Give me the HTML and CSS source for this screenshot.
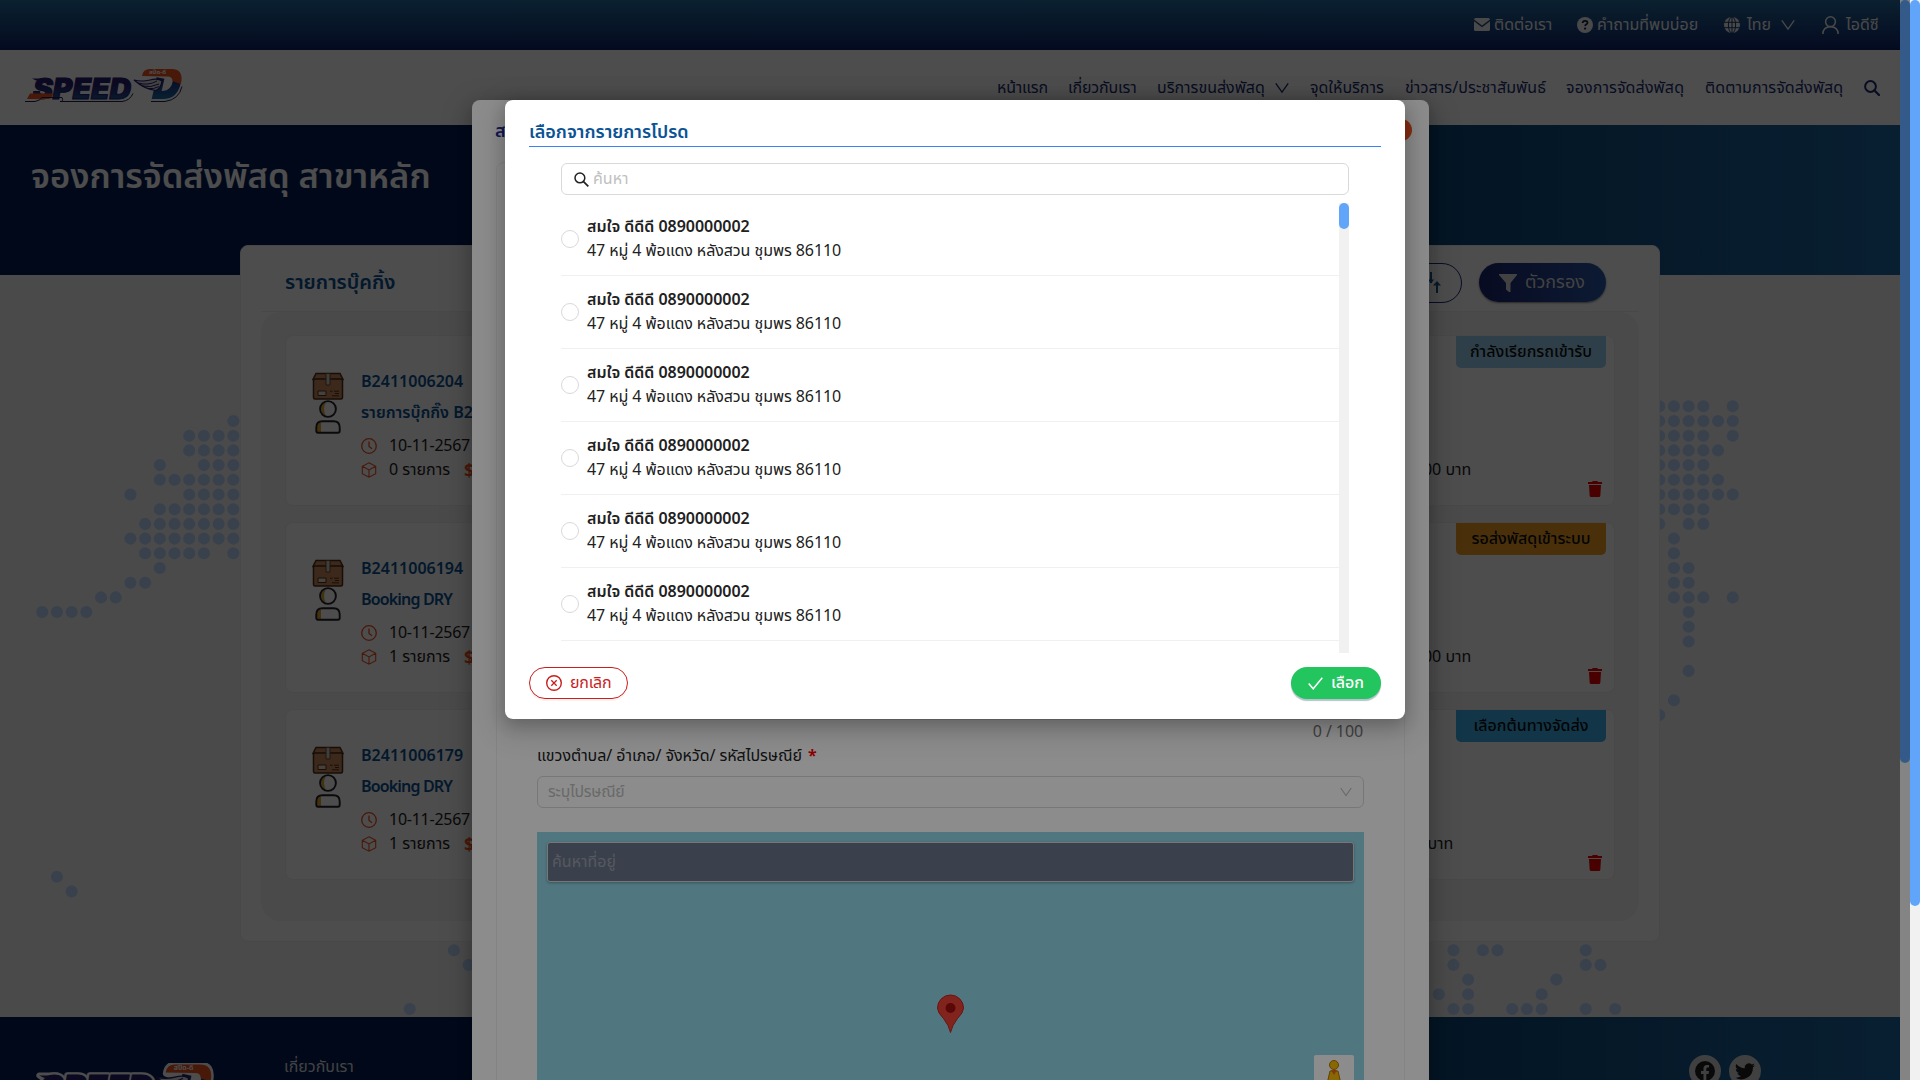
FILE: index.html
```html
<!DOCTYPE html>
<html lang="th">
<head>
<meta charset="utf-8">
<title>SPEED-D จองการจัดส่งพัสดุ</title>
<link rel="stylesheet" href="styles.css">
</head>
<body>
<svg width="0" height="0" class="defs" aria-hidden="true">
  <defs>
    <linearGradient id="navy" x1="0" y1="0" x2="0" y2="1"><stop offset="0" stop-color="#2a1a78"/><stop offset=".4" stop-color="#26206f"/><stop offset="1" stop-color="#1a70b0"/></linearGradient>
    <linearGradient id="navyD" gradientUnits="userSpaceOnUse" x1="0" y1="8" x2="0" y2="32"><stop offset="0" stop-color="#26206f"/><stop offset="1" stop-color="#1a70b0"/></linearGradient>
    <symbol id="i-search" viewBox="0 0 16 16"><circle cx="6.500" cy="6.500" r="5.400" fill="none" stroke="currentColor" stroke-width="2"/><path d="M10.500 10.500L15 15" stroke="currentColor" stroke-width="2.300" stroke-linecap="round"/></symbol>
    <symbol id="i-down" viewBox="0 0 14 14"><path d="M.8 2.300L7 11.200l6.200-8.900" fill="none" stroke="currentColor" stroke-width="1.300"/></symbol>
    <symbol id="i-box" viewBox="0 0 32 28"><path d="M4 1.500h24l3 6H1z" fill="#c98a5c" stroke="#52301b" stroke-width="1.500"/><rect x="1.500" y="7" width="29" height="20" rx="1.500" fill="#c98a5c" stroke="#52301b" stroke-width="1.500"/><path d="M14 1.500h4v11.500h-4z" fill="#d8cfc4" stroke="#6b4a33"/><path d="M6 19h8v4.500H6z" fill="#e8ddd0" stroke="#52301b"/><path d="M18 19.200h2.500m1.500 0h5M23 21.500h4M20 23.800h7" stroke="#52301b"/></symbol>
    <symbol id="i-person" viewBox="0 0 26 34"><path d="M8 4q-3.500 5 0 10l3 2Q7 9 11 2z" fill="#e0a82e"/><circle cx="13" cy="9" r="7.900" fill="none" stroke="#23232b" stroke-width="1.900"/><path d="M2 32V27q0-3.500 4-5v10z" fill="#e0a82e"/><path d="M1.300 31v-3.500q0-6.200 6.200-6.200h11q6.200 0 6.200 6.200V31q0 1.700-1.700 1.700H3q-1.700 0-1.700-1.700z" fill="none" stroke="#23232b" stroke-width="1.900"/></symbol>
    <symbol id="i-clock" viewBox="0 0 16 16"><circle cx="8" cy="8" r="7.300" fill="none" stroke="currentColor" stroke-width="1.300"/><path d="M8 3.500v5l3 2.300" fill="none" stroke="currentColor" stroke-width="1.300"/></symbol>
    <symbol id="i-cube" viewBox="0 0 16 16"><path d="M8 .8l6.700 3.500v7.400L8 15.200 1.300 11.700V4.300zM1.300 4.300L8 7.900l6.700-3.600M8 7.900v7.300" fill="none" stroke="currentColor" stroke-width="1.100"/></symbol>
    <symbol id="i-trash" viewBox="0 0 14 16"><path d="M0 1h4l.8-1h4.400L10 1h4v2H0zM1 4h12l-.7 10.700q-.1 1.300-1.400 1.300H3.100q-1.300 0-1.400-1.300z" fill="currentColor"/></symbol>
    <symbol id="i-logo" viewBox="0 0 160 36">
      <text x="9" y="31" class="logo-word halo" textLength="98" lengthAdjust="spacingAndGlyphs">SPEED</text>
      <path d="M118 9q1-8 8-8h22q11 0 9 13-3 17-17 18h-10l5-17-8-2z" class="halo"/>
      <path d="M8 10.500h16v3H12z" class="halo"/>
      <text x="9" y="31" class="logo-word" textLength="98" lengthAdjust="spacingAndGlyphs">SPEED</text>
      <path d="M8 10.500h16v2H12z" fill="#26206f"/>
      <path d="M6 25.500h23q-1 5.500-5 5.500H3z" fill="#f0521f"/>
      <path d="M1 33.500h10q5-1 7-4h20q2 4-2 4h62q8-1 11-8M127 33.500h14q14-2 17-15" fill="none" stroke="#242052" stroke-width="1"/>
      <path d="M136.500 10l-3.800 17h6q12 0 14.300-14" fill="none" stroke="url(#navyD)" stroke-width="8"/>
      <path d="M118 8q1-7 8-7h22q10.500 0 9.500 12l-1 3-8-3q0-4.500-5-4.500z" fill="#f0521f"/>
      <text x="125" y="5.800" class="logo-tag" textLength="17" lengthAdjust="spacingAndGlyphs">สปีด-ดี</text>
      <path d="M110 12q8 2 16 0 8-2 12 1-1 7-6 9.500-12-1.500-22-10.500z" fill="#ddd" stroke="#26206f" stroke-width="1.200"/>
      <path d="M114 15q10 3 19-2M118 18q9 2 17-2M123 20.500q7 1 12-2" fill="none" stroke="#26206f" stroke-width="1"/>
    </symbol>
  </defs>
</svg>

<div class="page">
  <div class="topbar">
    <span class="tb"><svg width="16" height="13" viewBox="0 0 16 13"><path d="M1.500 0h13Q16 0 16 1.500L8 7.500 0 1.500Q0 0 1.500 0zM0 3.200l8 6 8-6v8.300q0 1.500-1.500 1.500h-13Q0 13 0 11.500z" fill="currentColor"/></svg>ติดต่อเรา</span>
    <span class="tb faq"><svg width="16" height="16" viewBox="0 0 16 16"><circle cx="8" cy="8" r="8" fill="currentColor"/><path d="M5.600 6q.2-2.200 2.500-2.200 2.400 0 2.400 2 0 1-1.300 1.800-1.100.6-1.100 1.500" fill="none" stroke="#0b1c48" stroke-width="1.700"/><circle cx="8.100" cy="11.600" r="1.100" fill="#0b1c48"/></svg>คำถามที่พบบ่อย</span>
    <span class="tb lang"><svg width="16" height="16" viewBox="0 0 16 16"><circle cx="8" cy="8" r="8" fill="currentColor"/><path d="M0 5.300h16M0 10.700h16M8 0v16" stroke="#143a70"/><ellipse cx="8" cy="8" rx="3.600" ry="8.200" fill="none" stroke="#143a70"/></svg><span>ไทย</span><svg width="14" height="14"><use href="#i-down"/></svg></span>
    <span class="tb user"><svg width="17" height="18" viewBox="0 0 17 18"><circle cx="8.500" cy="5.700" r="4.900" fill="none" stroke="currentColor" stroke-width="1.500"/><path d="M.8 18q.3-7.300 7.700-7.300T16.200 18" fill="none" stroke="currentColor" stroke-width="1.500"/></svg>ไอดีซี</span>
  </div>
  <div class="nav">
    <svg class="logo" width="160" height="36"><use href="#i-logo"/></svg>
    <div class="links">
      <span class="n1">หน้าแรก</span><span class="n2">เกี่ยวกับเรา</span><span class="n3">บริการขนส่งพัสดุ</span><svg class="navdown" width="14" height="14"><use href="#i-down"/></svg><span class="n4">จุดให้บริการ</span><span class="n5">ข่าวสาร/ประชาสัมพันธ์</span><span class="n6">จองการจัดส่งพัสดุ</span><span class="n7">ติดตามการจัดส่งพัสดุ</span><svg width="16" height="16"><use href="#i-search"/></svg>
    </div>
  </div>
  <div class="banner"><h1>จองการจัดส่งพัสดุ สาขาหลัก</h1></div>
  <div class="body">
    <svg class="dots" width="1900" height="742" viewBox="0 0 1900 742"><path transform="translate(42.200 146) scale(14.700)" d="M13 0h.01M10 1h3.100M10 2h3.100M8 3h.01M11 3h2.100M8 4h5.100M6 5h.01M10 5h3.100M8 6h5.100M7 7h6.100M6 8h7.100M7 9h4.100M13 9h.01M8 10h.01M6 11h1.100M4 12h1.100M0 13h3.100M1 31h.01M2 32h.01M26 35h2.100M28 36h.01M29 37h.01M25 40h.01M110 -1h3.100M115 -1h.01M110 0h5.100M110 1h3.100M115 1h.01M110 2h4.100M110 3h3.100M110 4h4.100M110 5h5.100M110 6h3.100M110 7h.01M112 7h1.100M111 8h.01M111 9h.01M111 10h1.100M111 11h1.100M111 12h2.100M115 12h.01M112 13h.01M112 14h.01M112 15h.01M112 17h.01M111 19h.01M110 20h.01M97 35h2.100M104 35h.01M96 36h.01M98 36h1.100M105 36h.01M96 37h.01M105 37h1.100M97 38h.01M103 38h.01M95 39h.01M97 39h.01M102 39h.01M96 40h1.100M100 40h2.100M105 40h.01M107 40h.01" fill="none" stroke="#bfdbfe" stroke-width=".82" stroke-linecap="round" stroke-dasharray=".005 .995"/></svg>
    <div class="main">
      <div class="mainhead">
        <h2>รายการบุ๊คกิ้ง</h2>
        <div class="actions">
          <span class="sort"><svg width="24" height="22" viewBox="0 0 24 22"><path d="M14 0v11M20 21V10" stroke="currentColor" stroke-width="2"/><path d="M11 7.500h6L14 11.500zM16 13.500h8L20 9z" fill="currentColor"/></svg></span>
          <span class="filter"><svg width="18" height="18" viewBox="0 0 18 18"><path d="M0 0h18v1l-6.500 8v9H10l-3-2.500V9L0 1z" fill="currentColor"/></svg>ตัวกรอง</span>
        </div>
      </div>
      <div class="panel">
        <div class="bk">
          <div class="pics"><svg width="32" height="28"><use href="#i-box"/></svg><svg width="26" height="34"><use href="#i-person"/></svg></div>
          <div class="info"><b>B2411006204</b><b class="name">รายการบุ๊กกิ๊ง B2411006204</b><div class="row"><svg width="16" height="16"><use href="#i-clock"/></svg><span class="date">10-11-2567</span></div><div class="row r2"><svg width="16" height="16"><use href="#i-cube"/></svg><span class="qty">0 รายการ</span><em>$</em><span class="baht">0.00 บาท</span></div></div>
          <div class="side"><span class="badge sky">กำลังเรียกรถเข้ารับ</span><svg class="trash" width="14" height="16"><use href="#i-trash"/></svg></div>
        </div>
        <div class="bk">
          <div class="pics"><svg width="32" height="28"><use href="#i-box"/></svg><svg width="26" height="34"><use href="#i-person"/></svg></div>
          <div class="info"><b>B2411006194</b><b class="dry">Booking DRY</b><div class="row"><svg width="16" height="16"><use href="#i-clock"/></svg><span class="date">10-11-2567</span></div><div class="row r2"><svg width="16" height="16"><use href="#i-cube"/></svg><span class="qty">1 รายการ</span><em>$</em><span class="baht">0.00 บาท</span></div></div>
          <div class="side"><span class="badge amber">รอส่งพัสดุเข้าระบบ</span><svg class="trash" width="14" height="16"><use href="#i-trash"/></svg></div>
        </div>
        <div class="bk">
          <div class="pics"><svg width="32" height="28"><use href="#i-box"/></svg><svg width="26" height="34"><use href="#i-person"/></svg></div>
          <div class="info"><b>B2411006179</b><b class="dry">Booking DRY</b><div class="row"><svg width="16" height="16"><use href="#i-clock"/></svg><span class="date">10-11-2567</span></div><div class="row r2"><svg width="16" height="16"><use href="#i-cube"/></svg><span class="qty">1 รายการ</span><em>$</em><span class="baht third">0 บาท</span></div></div>
          <div class="side"><span class="badge blue">เลือกต้นทางจัดส่ง</span><svg class="trash" width="14" height="16"><use href="#i-trash"/></svg></div>
        </div>
      </div>
    </div>
  </div>
  <div class="footer">
    <svg class="flogo" width="184" height="42"><use href="#i-logo"/></svg>
    <span class="about">เกี่ยวกับเรา</span>
    <div class="social">
      <span><svg width="20" height="20" viewBox="0 0 20 20"><circle cx="10" cy="10" r="10" fill="#222"/><path d="M8.500 20v-7H6v-3h2.500V7.500Q8.500 4 12 4h2v2.600h-1.500q-1.200 0-1.200 1.300V10H14l-.5 3h-2.200v7z" fill="#d8d8d8"/></svg></span>
      <span><svg width="20" height="17" viewBox="0 0 24 20"><path d="M24 2.400a9.800 9.800 0 0 1-2.800.8 5 5 0 0 0 2.100-2.700 9.900 9.900 0 0 1-3.100 1.200A4.900 4.900 0 0 0 11.800 6.100 14 14 0 0 1 1.700.9a4.900 4.900 0 0 0 1.500 6.600A4.900 4.900 0 0 1 1 6.900a4.900 4.900 0 0 0 3.900 4.900 5 5 0 0 1-2.200.1 4.900 4.900 0 0 0 4.600 3.400A9.900 9.900 0 0 1 0 17.300 14 14 0 0 0 21.500 4.900 10 10 0 0 0 24 2.400z" fill="#222"/></svg></span>
    </div>
  </div>
</div>

<div class="mask">
  <div class="dialog1">
    <div class="d1head"><span class="d1title">ส</span><i class="close"></i></div>
    <div class="d1body">
      <div class="area"></div>
      <div class="count">0 / 100</div>
      <div class="label">แขวงตำบล/ อำเภอ/ จังหวัด/ รหัสไปรษณีย์ <b>*</b></div>
      <div class="select"><span>ระบุไปรษณีย์</span><svg width="12" height="12"><use href="#i-down"/></svg></div>
      <div class="map">
        <div class="mapsearch">ค้นหาที่อยู่</div>
        <svg class="pin" width="27" height="38" viewBox="0 0 27 38"><path d="M13.500 37.500Q12 30.500 6.500 23.500.5 17.500.5 13a13 13 0 0 1 26 0q0 4.500-6 10.500-5.500 7-7 14z" fill="#ea4335" stroke="#c5221f"/><circle cx="13.500" cy="13" r="5" fill="#a50e0e"/></svg>
        <div class="peg"><svg width="16" height="26" viewBox="0 0 16 26"><circle cx="8" cy="5" r="4.500" fill="#fbbc04" stroke="#b07a00"/><path d="M4 11h8l3 13-3 2H4l-3-2z" fill="#fbbc04" stroke="#b07a00"/><path d="M5 10h6l-3 5z" fill="#e06a1c"/></svg></div>
      </div>
    </div>
  </div>
  <div class="sb"><i class="th1"></i></div>
</div>

<div class="mask">
  <div class="dialog2">
    <h3>เลือกจากรายการโปรด</h3>
    <div class="find"><svg width="15" height="15" viewBox="0 0 15 15"><circle cx="5.900" cy="5.900" r="4.900" fill="none" stroke="#222" stroke-width="1.500"/><path d="M9.300 9.300l5 5" stroke="#222" stroke-width="1.700"/></svg><span>ค้นหา</span></div>
    <div class="list">
      <div class="items">
        <div class="item"><i></i><div><b>สมใจ ดีดีดี 0890000002</b><p>47 หมู่ 4 พ้อแดง หลังสวน ชุมพร 86110</p></div></div>
        <div class="item"><i></i><div><b>สมใจ ดีดีดี 0890000002</b><p>47 หมู่ 4 พ้อแดง หลังสวน ชุมพร 86110</p></div></div>
        <div class="item"><i></i><div><b>สมใจ ดีดีดี 0890000002</b><p>47 หมู่ 4 พ้อแดง หลังสวน ชุมพร 86110</p></div></div>
        <div class="item"><i></i><div><b>สมใจ ดีดีดี 0890000002</b><p>47 หมู่ 4 พ้อแดง หลังสวน ชุมพร 86110</p></div></div>
        <div class="item"><i></i><div><b>สมใจ ดีดีดี 0890000002</b><p>47 หมู่ 4 พ้อแดง หลังสวน ชุมพร 86110</p></div></div>
        <div class="item"><i></i><div><b>สมใจ ดีดีดี 0890000002</b><p>47 หมู่ 4 พ้อแดง หลังสวน ชุมพร 86110</p></div></div>
      </div>
      <div class="sb3"><i></i></div>
    </div>
    <div class="btns">
      <span class="cancel"><svg width="16" height="16" viewBox="0 0 16 16"><circle cx="8" cy="8" r="7.300" fill="none" stroke="currentColor" stroke-width="1.400"/><path d="M5.300 5.300l5.400 5.400M10.700 5.300l-5.400 5.400" stroke="currentColor" stroke-width="1.300"/></svg>ยกเลิก</span>
      <span class="ok"><svg width="15" height="13" viewBox="0 0 15 13"><path d="M.7 6.500l4.500 5.300L14.300.8" fill="none" stroke="currentColor" stroke-width="1.500"/></svg>เลือก</span>
    </div>
  </div>
</div>
<div class="sb outer"><i class="th2"></i></div>
</body>
</html>
```
FILE: styles.css
```css
*{box-sizing:border-box}
html,body{height:100%;overflow:hidden}
body{margin:0;font:16px/24px "Noto Sans Thai","Noto Sans",sans-serif;color:#212121;background:#f6f6f6;white-space:nowrap}
h1,h2,h3,p{margin:0}
svg{flex:none;display:block;overflow:visible}
.defs{position:absolute}
i{display:block}

.page{width:1900px;height:1080px;overflow:hidden}
.topbar{height:50px;background:linear-gradient(#246d9f,#10246a);display:flex;justify-content:flex-end;padding:0 21px 1px 0;align-items:center;color:#f2f2f2}
.tb{display:flex;align-items:center;gap:4px;width:78px}
.faq{margin-left:25px;width:122px}
.lang{margin-left:25px;gap:7px;width:71px}
.lang span{width:26px;margin-right:1px}
.user{margin-left:27px;gap:7px;width:57px}

.nav{height:75px;background:#fff;display:flex;justify-content:space-between;align-items:center;padding:0 20px 0 24px}
.logo{margin-top:-4px}
.logo-word{font:italic 900 28px "Inter","Liberation Sans",sans-serif;fill:url(#navy);stroke:#26206f;stroke-width:1}
.halo{stroke:#fff;stroke-width:5;fill:#fff;stroke-linejoin:round}
.logo-tag{font:bold 6px "Noto Sans Thai",sans-serif;fill:#fff}
.links{display:flex;align-items:center;color:#1c2f72}
.n1{width:71px;letter-spacing:-.2px}
.n2{width:89px;letter-spacing:-.15px}
.n3{width:118px}
.navdown{margin-right:21px}
.n4{width:95px}
.n5{width:161px;letter-spacing:.1px}
.n6{width:139px;letter-spacing:.13px}
.n7{width:159px;letter-spacing:.1px}

.banner{height:150px;background:linear-gradient(90deg,#031e59 0,#031e59 50%,#0d4577 75%,#1e6aa5);padding:33px 0 0 31px}
h1{font-size:34.500px;line-height:40px;font-weight:600;color:#fff}
.body{height:742px;position:relative}
.dots{position:absolute;left:0;top:0}
.main{position:relative;width:1420px;height:697px;top:-30px;margin:0 auto;background:#fff;border:1px solid #f0f0f0;border-radius:8px;padding:0 20px}
.mainhead{height:66px;display:flex;justify-content:space-between;align-items:center;padding:8px 33px 0 24px;border-bottom:1px solid #f0f0f0}
h2{font-size:20px;font-weight:600;color:#0b5394}
.actions{display:flex;gap:17px;align-items:center}
.sort{width:90px;height:40px;border:1px solid #1e2a86;border-radius:20px;display:flex;align-items:center;justify-content:flex-end;padding-right:20px;color:#1b5c8c}
.filter{width:127px;height:39px;border-radius:20px;background:linear-gradient(90deg,#1b2670,#2a5aaa);box-shadow:0 1px 2px #888;color:#ddd;font-size:18px;display:flex;align-items:center;gap:8px;padding-left:20px}
.panel{height:609px;background:#f6f6f6;border-radius:20px;padding:23px 24px;display:flex;flex-direction:column;gap:16px}
.bk{height:171px;background:#fff;border:1px solid #f0f0f0;border-radius:8px;display:flex;flex:none}
.pics{width:75px;flex:none;padding:36px 0 0 26px;display:flex;flex-direction:column}
.pics svg+svg{margin-left:3px}
.info{flex:1;min-width:0;padding-top:34px}
.info b{display:block;font-weight:600;color:#0b5394;line-height:24px;margin-bottom:7px}
.info .dry{letter-spacing:-.85px}
.row{display:flex;align-items:center;gap:12px;height:24px;margin-top:9px;color:#222}
.row svg{color:#f0521f}
.r2{margin-top:0}
.row em{font:bold 18px "Noto Sans",sans-serif;color:#f0521f;margin-left:1px;margin-right:-1px}
.date{letter-spacing:-.25px}
.qty{width:62px;flex:none}
.baht{width:986px;flex:none;text-align:right}
.baht.third{width:968px}
.side{width:158px;flex:none;padding-right:8px;display:flex;flex-direction:column;justify-content:space-between;align-items:flex-end}
.badge{width:150px;height:32px;line-height:32px;text-align:center;font-weight:500;color:#111;border-radius:0 0 5px 5px}
.sky{background:#9bd3f2}.amber{background:#f2a024}.blue{background:#3cb4f0}
.trash{color:#f00000;margin:0 4px 8px 0}

.footer{height:63px;background:linear-gradient(90deg,#031e59 0,#031e59 50%,#0d4577 75%,#1e6aa5);display:flex;padding-left:30px;color:#ddd}
.flogo{margin-top:46px}
.about{margin:38px 0 0 70px;width:1405px}
.social{display:flex;gap:8px;margin-top:38px}
.social span{width:32px;height:32px;border-radius:50%;background:#d8d8d8;display:flex;align-items:center;justify-content:center}

.mask{position:absolute;left:0;top:0;width:1910px;height:1080px;overflow:hidden;background:rgba(0,0,0,.45)}
.dialog1{width:957px;height:1100px;margin:100px 0 0 472px;background:#fff;border-radius:8px;padding:20px 17px 0 24px;box-shadow:0 6px 16px rgba(0,0,0,.2),0 9px 28px 8px rgba(0,0,0,.12)}
.d1head{display:flex;justify-content:space-between;align-items:center;height:24px;font-size:18px;font-weight:600;color:#1e2a9a}
.d1title{margin-left:-1px}
.close{width:22px;height:22px;border-radius:50%;background:#f0521f;margin-top:-5px}
.d1body{width:909px;height:1000px;margin-top:18px;border:1px solid #f0f0f0;border-radius:8px;padding:0 40px}
.area{height:557px;border-bottom:1px solid #d9d9d9;border-radius:6px}
.count{text-align:right;height:24px;color:#777;letter-spacing:-.1px;padding-right:1px}
.label{letter-spacing:-.04px}
.label b{color:#f00;margin-left:2px}
.select{height:32px;margin-top:8px;border:1px solid #d9d9d9;border-radius:6px;display:flex;align-items:center;justify-content:space-between;padding:0 11px 0 10px;color:#bfbfbf;letter-spacing:-.2px;font-size:15.800px}
.map{height:300px;margin-top:24px;background:#92d9ea;position:relative;padding:10px}
.mapsearch{height:40px;width:807px;border:1px solid #d9d9d9;border-radius:3px;background:#6b758b;color:#9ca3af;line-height:39px;padding-left:4px;box-shadow:0 1px 3px rgba(0,0,0,.3)}
.pin{position:absolute;left:400px;top:163px}
.peg{position:absolute;left:777px;top:223px;width:40px;height:60px;border-radius:2px;background:#fff;padding:5px 12px}
.sb{position:absolute;left:1900px;top:0;width:10px;height:1080px;background:#f1f1f1}
.sb i{width:10px;border-radius:5px;background:#60a5fa}
.th1{height:763px}.th2{height:906px}
.outer{left:1910px}

.dialog2{width:900px;height:619px;margin:100px 0 0 505px;background:#fff;border-radius:8px;padding:20px 24px;box-shadow:0 6px 16px rgba(0,0,0,.2),0 9px 28px 8px rgba(0,0,0,.12)}
h3{font-size:18px;line-height:26px;height:27px;font-weight:600;color:#0b5394;border-bottom:1px solid #3b82f6}
.find{height:32px;margin:16px 32px 8px;border:1px solid #d9d9d9;border-radius:6px;display:flex;align-items:center;gap:4px;padding-left:12px;color:#bfbfbf}
.list{height:450px;margin:0 32px;display:flex;overflow:hidden}
.items{flex:1}
.item{height:73px;border-bottom:1px solid #f0f0f0;display:flex;align-items:center;gap:8px}
.item i{width:18px;height:18px;border:1px solid #d9d9d9;border-radius:50%}
.item b{display:block;font-weight:600;letter-spacing:-.03px}
.item p{letter-spacing:-.08px}
.sb3{width:10px;background:#f1f1f1}
.sb3 i{height:26px;border-radius:5px;background:#60a5fa}
.btns{display:flex;justify-content:space-between;margin-top:14px}
.cancel,.ok{height:32px;border-radius:16px;display:flex;align-items:center;gap:8px}
.cancel{width:99px;border:1px solid #c81e1e;color:#c81e1e;padding-left:16px;letter-spacing:-.2px;box-shadow:0 2px 0 rgba(255,38,5,.06)}
.ok{width:90px;background:#22c55e;color:#fff;font-weight:500;padding-left:17px;box-shadow:0 2px 1px #b4c3cc}
```
